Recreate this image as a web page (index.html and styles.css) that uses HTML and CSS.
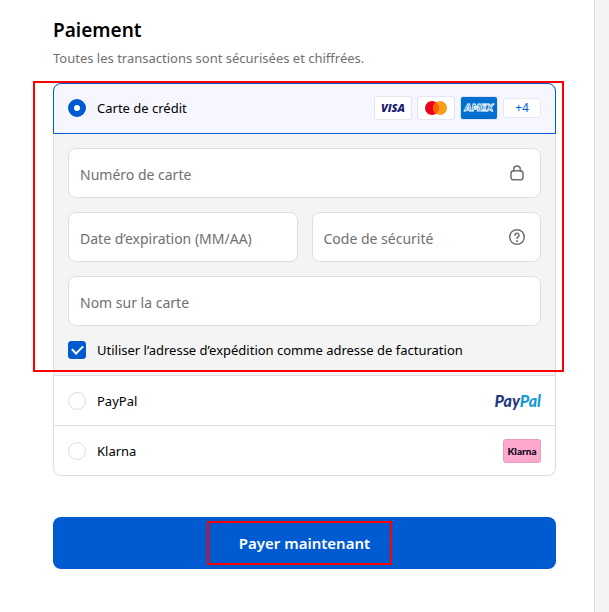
FILE: index.html
```html
<!DOCTYPE html>
<html lang="fr">
<head>
<meta charset="utf-8">
<meta name="viewport" content="width=device-width, initial-scale=1">
<title>Paiement</title>
<link rel="stylesheet" href="styles.css">
</head>
<body>
<div class="page">
  <main class="checkout">
    <h1 class="title">Paiement</h1>
    <p class="subtitle">Toutes les transactions sont sécurisées et chiffrées.</p>
    <form class="form">
      <div class="methods">
        <div class="card-method">
          <div class="method method-selected">
            <label class="choice"><input class="radio" type="radio" name="method" checked>Carte de crédit</label>
            <div class="brands">
              <span class="brand visa">VISA</span>
              <span class="brand">
                <svg class="mastercard" viewBox="0 0 22 14" role="img" aria-label="Mastercard">
                  <circle cx="7" cy="7" r="7" fill="#eb001b"/>
                  <circle cx="15" cy="7" r="7" fill="#f79e1b"/>
                  <path d="M11 1.26a7 7 0 0 1 0 11.48a7 7 0 0 1 0-11.48z" fill="#ff5f00"/>
                </svg>
              </span>
              <span class="brand amex">
                <svg class="amex-logo" viewBox="0 0 38 24" role="img" aria-label="Amex">
                  <text class="amex-text" x="19" y="15" text-anchor="middle">AMEX</text>
                </svg>
              </span>
              <button class="more" type="button">+4</button>
            </div>
          </div>
          <div class="fields">
            <div class="field field-wide">
              <input class="input" type="text" placeholder="Numéro de carte" aria-label="Numéro de carte">
              <svg class="field-icon" viewBox="0 0 18 18" aria-hidden="true">
                <path d="M5.7 7.2V5.2a3.3 3.3 0 0 1 6.6 0v2"/>
                <rect x="3" y="6.8" width="12" height="9" rx="2.6"/>
              </svg>
            </div>
            <div class="field">
              <input class="input" type="text" placeholder="Date d’expiration (MM/AA)" aria-label="Date d’expiration (MM/AA)">
            </div>
            <div class="field">
              <input class="input" type="text" placeholder="Code de sécurité" aria-label="Code de sécurité">
              <svg class="field-icon" viewBox="0 0 18 18" aria-hidden="true">
                <circle cx="9" cy="9" r="7.3"/>
                <path d="M7 7.2a2 2 0 1 1 3.2 1.6C9.4 9.4 9 9.6 9 10.4"/>
                <circle class="dot" cx="9" cy="12.9" r="1"/>
              </svg>
            </div>
            <div class="field field-wide">
              <input class="input" type="text" placeholder="Nom sur la carte" aria-label="Nom sur la carte">
            </div>
            <label class="choice billing"><input class="checkbox" type="checkbox" checked>Utiliser l’adresse d’expédition comme adresse de facturation</label>
          </div>
        </div>
        <div class="method">
          <label class="choice"><input class="radio" type="radio" name="method">PayPal</label>
          <span class="paypal">Pay<span class="paypal-end">Pal</span></span>
        </div>
        <div class="method">
          <label class="choice"><input class="radio" type="radio" name="method">Klarna</label>
          <span class="brand klarna">Klarna</span>
        </div>
      </div>
      <button class="pay" type="submit"><span class="pay-label">Payer maintenant</span></button>
    </form>
  </main>
  <aside class="summary"></aside>
</div>
</body>
</html>
```
FILE: styles.css
```css
* { box-sizing: border-box; }

body {
  margin: 0;
  background: #fff;
  color: #000;
  font: 14px/20px "Noto Sans", "Open Sans", sans-serif;
}

.page {
  display: grid;
  grid-template-columns: 1fr 15px;
  min-height: 100vh;
}

.checkout { padding: 16px 38px 40px 53px; }

.summary {
  background: #f4f4f4;
  border-left: 1px solid #dedede;
}

.title {
  margin: 0;
  font-size: 19px;
  line-height: 28px;
  font-weight: 600;
}

.subtitle {
  margin: 4px 0 15px;
  color: #707070;
  font-size: 13px;
}

.methods {
  border: 1px solid #dedede;
  border-top: 0;
  border-radius: 8px;
}

.card-method { position: relative; }

/* Outline that draws attention to the card section */
.card-method::after {
  content: "";
  position: absolute;
  inset: -2px -9px 3px -21px;
  border: 2px solid #f00;
  pointer-events: none;
}

.method {
  display: flex;
  align-items: center;
  justify-content: space-between;
  height: 50px;
  padding: 0 14px;
  border-top: 1px solid #dedede;
}

.method-selected {
  height: 51px;
  margin: 0 -1px;
  padding-bottom: 2px;
  background: #f5f6ff;
  border: 1px solid #005bd1;
  border-radius: 8px 8px 0 0;
}

.choice {
  display: flex;
  align-items: center;
  gap: 11px;
  font-size: 13px;
}

.radio, .checkbox {
  appearance: none;
  flex: none;
  width: 18px;
  height: 18px;
  margin: 0;
  border: 1px solid #dedede;
  background: #fff;
}

.radio { border-radius: 50%; }
.radio:checked { border: 6px solid #005bd1; }

.checkbox { border-radius: 3px; }

.checkbox:checked {
  display: grid;
  place-items: center;
  border-color: #005bd1;
  background: #005bd1;
}

.checkbox:checked::before {
  content: "";
  width: 9px;
  height: 5px;
  margin-bottom: 3px;
  border: solid #fff;
  border-width: 0 0 2px 2px;
  transform: rotate(-45deg);
}

.brands {
  display: flex;
  align-items: center;
  gap: 5px;
}

.brand {
  display: flex;
  align-items: center;
  justify-content: center;
  width: 38px;
  height: 24px;
  border: 1px solid #e4e4ee;
  border-radius: 3px;
  background: #fff;
}

.visa {
  color: #1a1f71;
  font: italic 800 11px "Open Sans", sans-serif;
}

.mastercard { width: 22px; height: 14px; }

.amex { background: #006fcf; }
.amex-logo { width: 38px; height: 24px; flex: none; }

.amex-text {
  fill: #006fcf;
  stroke: #fff;
  stroke-width: 0.8px;
  font: italic 700 9px "DejaVu Sans", sans-serif;
}

.more {
  width: 38px;
  height: 20px;
  padding: 0;
  border: 1px solid #e8e8ee;
  border-radius: 3px;
  background: #fff;
  color: #005bd1;
  font: 12px/16px "Noto Sans", sans-serif;
}

.fields {
  display: grid;
  grid-template-columns: 1fr 1fr;
  gap: 14px;
  padding: 14px 14px 15px;
  background: #f4f4f4;
}

.field { position: relative; }
.field-wide, .billing { grid-column: 1 / -1; }

.input {
  display: block;
  width: 100%;
  height: 50px;
  padding: 2px 11px 0;
  border: 1px solid #dedede;
  border-radius: 8px;
  background: #fff;
  color: #000;
  font: 14px/20px "Noto Sans", sans-serif;
}

.input::placeholder { color: #707070; opacity: 1; }

.field-icon {
  position: absolute;
  top: 16px;
  right: 15px;
  width: 18px;
  height: 18px;
  fill: none;
  stroke: #707070;
  stroke-width: 1.5;
  stroke-linecap: round;
}

.dot { fill: #707070; stroke: none; }

.paypal {
  color: #253b80;
  font: italic 900 16px Lato, sans-serif;
}

.paypal-end { color: #179bd7; }

.klarna {
  border-color: #e79bc0;
  background: #ffa8cd;
  color: #0b051d;
  font: 900 10px Lato, sans-serif;
}

.pay {
  display: block;
  width: 100%;
  height: 52px;
  margin-top: 41px;
  padding: 0;
  border: 0;
  border-radius: 8px;
  background: #005bd1;
  color: #fff;
  font: 600 15px/20px "Noto Sans", sans-serif;
}

.pay-label {
  display: inline-block;
  margin-right: 10px;
  padding: 10px 20px 10px 30px;
  border: 2px solid #f00;
}
```
